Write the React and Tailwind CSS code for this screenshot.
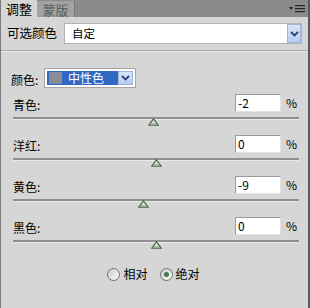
import { useState } from "react";

const sliders = [
  { label: "青色:", value: -2 },
  { label: "洋红:", value: 0 },
  { label: "黄色:", value: -9 },
  { label: "黑色:", value: 0 },
];

const Chevron = () => (
  <svg width="9" height="6" viewBox="0 0 9 6">
    <path d="M1 1 L4.5 4.5 L8 1" fill="none" stroke="#2b3f7a" strokeWidth="1.8" />
  </svg>
);

const MenuIcon = () => (
  <svg width="16" height="10" viewBox="0 0 16 10">
    <path d="M0 3 L4 3 L2 6 Z" fill="#222" />
    <rect x="6" y="1" width="10" height="1.2" fill="#222" />
    <rect x="6" y="4" width="10" height="1.2" fill="#222" />
    <rect x="6" y="7" width="10" height="1.2" fill="#222" />
  </svg>
);

const Thumb = () => (
  <svg width="11" height="8" viewBox="0 0 11 8">
    <path d="M5.5 0.8 L10.2 7.2 L0.8 7.2 Z" fill="#d6e6d4" stroke="#4a6247" strokeWidth="1.1" />
    <path d="M2.5 6 L8.5 6" stroke="#7d9a7a" strokeWidth="1" />
  </svg>
);

const SliderRow = ({ label, value }) => {
  const left = 143 + value * 1.42;
  return (
    <div className="flex flex-col">
      <div className="flex items-center pl-[12px] pr-[12px] h-[18px]">
        <span className="flex-1 pt-[3px]">{label}</span>
        <div className="w-[46px] h-[18px] bg-white border border-[#9a9a9a] border-r-[#e2e2e2] border-b-[#e2e2e2] pl-[2px] leading-[16px] text-[12px]">
          {value}
        </div>
        <span className="ml-[5px] w-[10px] text-[12px]">%</span>
      </div>
      <div className="relative mt-[5px] ml-[12px] w-[286px] h-[3px] bg-[#8f8f8f] border-b border-[#eaeaea]">
        <div className="absolute top-[1px]" style={{ left: `${left - 5}px` }}>
          <Thumb />
        </div>
      </div>
      <div className="h-[15px]" />
    </div>
  );
};

const Radio = ({ checked }) => (
  <span className="w-[13px] h-[13px] rounded-full border border-[#6f6f6f] bg-gradient-to-br from-[#c8c8c8] to-white flex items-center justify-center">
    {checked && <span className="w-[5px] h-[5px] rounded-full bg-[#3f7a4f]" />}
  </span>
);

export default function App() {
  const [mode, setMode] = useState("abs");
  return (
    <div
      className="w-[310px] h-[308px] bg-[#d6d6d6] flex flex-col text-[12px] text-black border-l border-r-2 border-l-[#7c7c7c] border-r-[#5a5a5a] overflow-hidden"
      style={{ fontFamily: '"Noto Sans CJK SC", "Liberation Sans", sans-serif' }}
    >
      {/* tabs */}
      <div className="h-[17px] bg-[#8b8b8b] flex items-end shrink-0">
        <div className="w-[36px] h-[17px] bg-[#d6d6d6] flex items-center justify-center text-[13px] leading-none">
          调整
        </div>
        <div className="w-[38px] h-[16px] bg-[#a2a2a2] border-r border-[#777] flex items-center justify-center text-[13px] leading-none text-[#5c5c5c]">
          蒙版
        </div>
        <div className="flex-1" />
        <div className="mr-[3px] mb-[3px]">
          <MenuIcon />
        </div>
      </div>

      {/* preset row */}
      <div className="flex items-center mt-[6px] pl-[6px] h-[21px]">
        <span className="w-[57px] text-[12.5px]">可选颜色</span>
        <div className="w-[238px] h-[21px] bg-white border border-[#b4b4b4] flex items-center">
          <span className="flex-1 pl-[7px] text-[11.5px]">自定</span>
          <div className="w-[14px] h-[19px] bg-gradient-to-b from-[#d9e5f7] to-[#b8cdef] border border-[#9fb6dc] flex items-center justify-center">
            <Chevron />
          </div>
        </div>
      </div>

      <div className="mt-[6px] border-t border-[#a9a9a9] border-b border-b-[#ececec]" />

      {/* color select */}
      <div className="flex items-center mt-[16px] pl-[10px] h-[20px]">
        <span className="w-[33px] pt-[3px]">颜色:</span>
        <div className="w-[92px] h-[20px] bg-white border border-[#a5a5a5] p-[2px] flex">
          <div className="flex-1 bg-[#3168c4] flex items-center pl-[2px]">
            <span className="w-[13px] h-[12px] bg-[#8b8d93] border border-[#7f89a3]" />
            <span className="ml-[6px] text-white text-[12px] leading-none">中性色</span>
          </div>
          <div className="w-[15px] bg-gradient-to-b from-[#d9e5f7] to-[#b8cdef] border border-[#9fb6dc] flex items-center justify-center">
            <Chevron />
          </div>
        </div>
      </div>

      {/* sliders */}
      <div className="mt-[6px] flex flex-col">
        {sliders.map((s) => (
          <SliderRow key={s.label} label={s.label} value={s.value} />
        ))}
      </div>

      {/* mode */}
      <div className="flex items-center justify-center mt-[7px] pr-[2px] gap-[12px]">
        <label className="flex items-center gap-[3px] cursor-pointer" onClick={() => setMode("rel")}>
          <Radio checked={mode === "rel"} />
          <span className="text-[12px]">相对</span>
        </label>
        <label className="flex items-center gap-[3px] cursor-pointer" onClick={() => setMode("abs")}>
          <Radio checked={mode === "abs"} />
          <span className="text-[12px]">绝对</span>
        </label>
      </div>
    </div>
  );
}
